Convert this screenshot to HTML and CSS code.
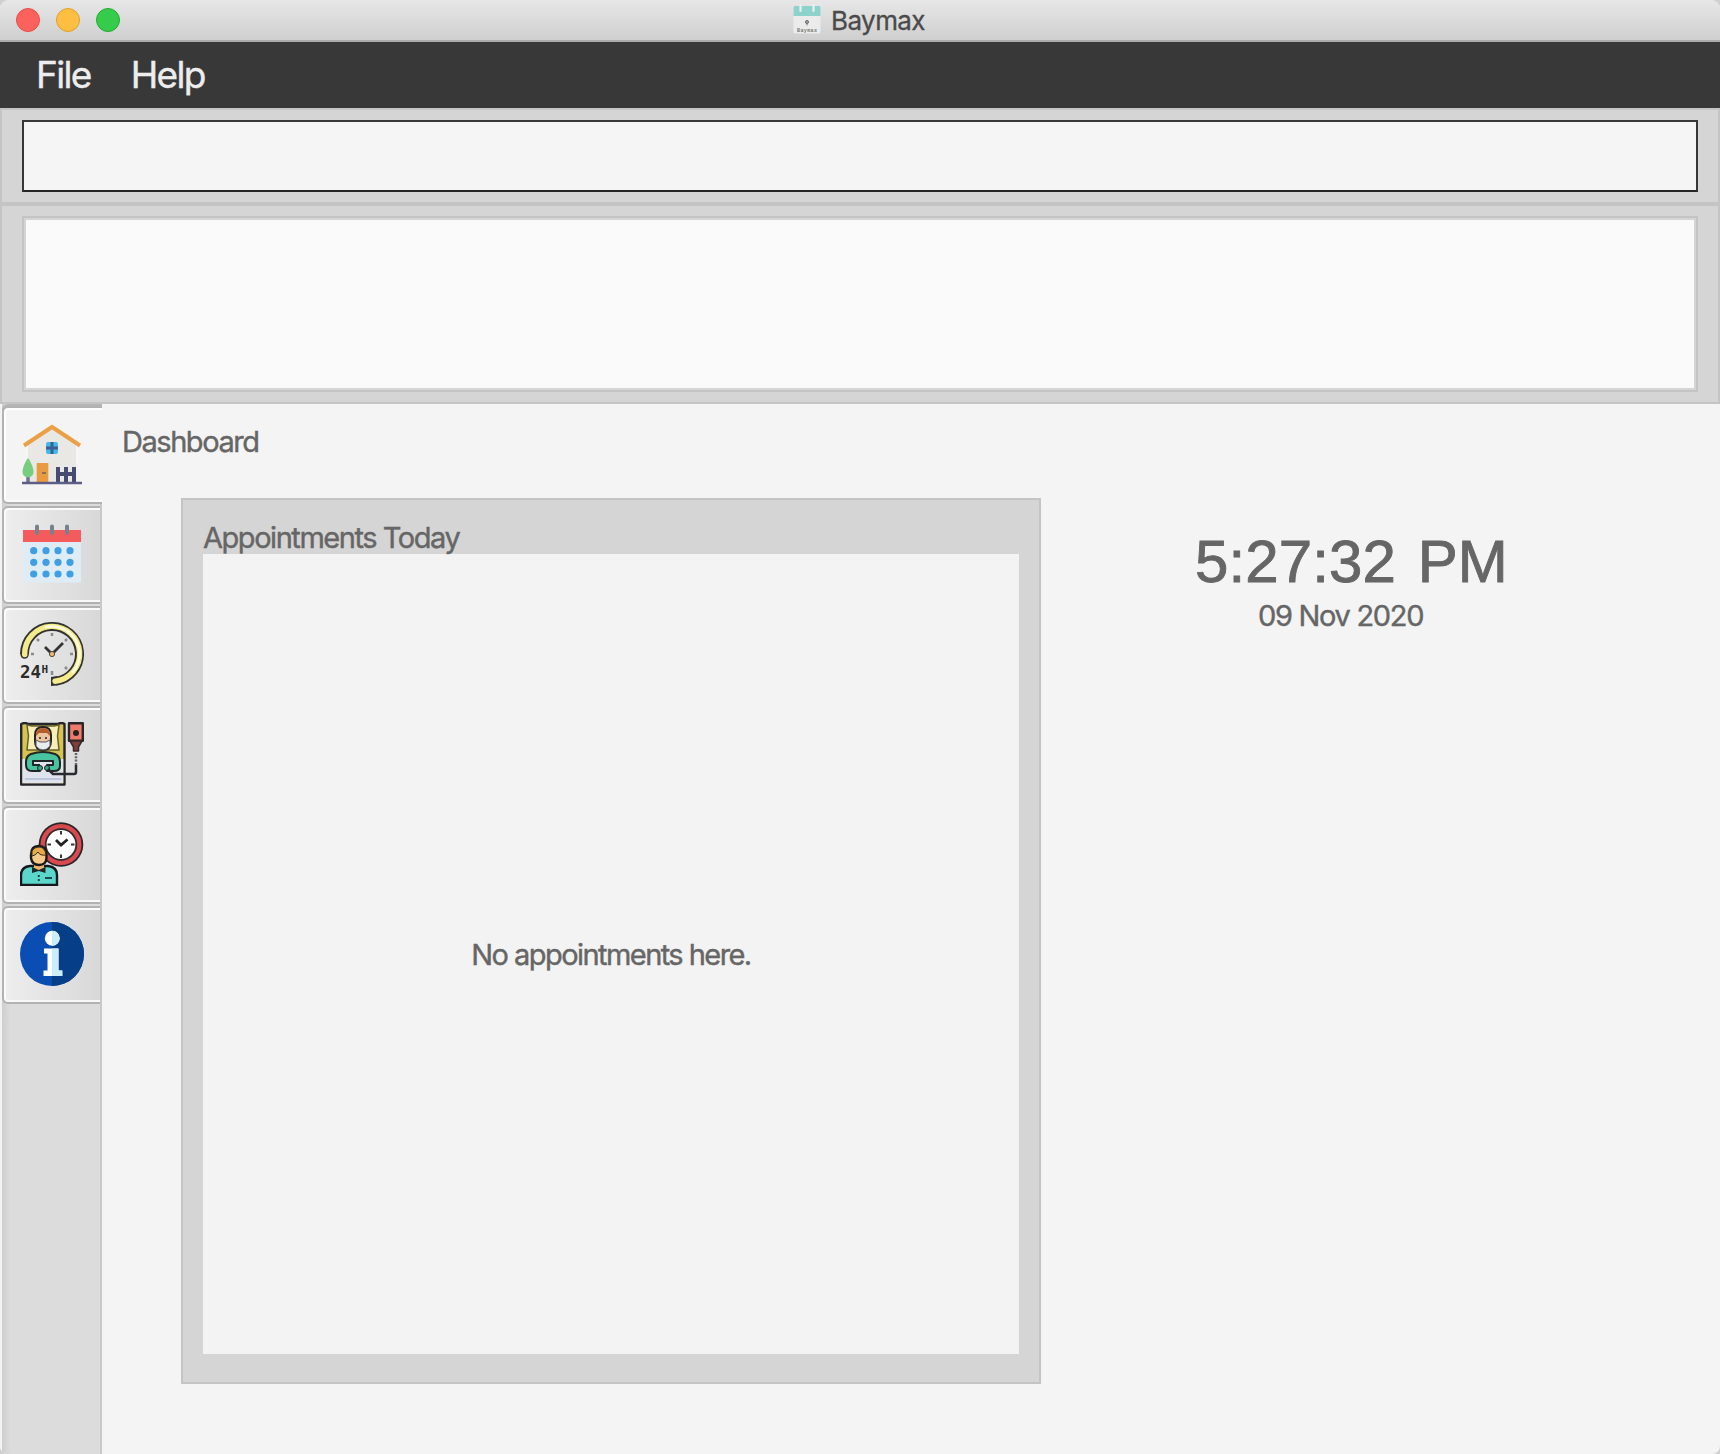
FILE: index.html
```html
<!DOCTYPE html>
<html lang="en">
<head>
<meta charset="utf-8">
<title>Baymax</title>
<link rel="stylesheet" href="styles.css">
</head>
<body>
<div class="window">
  <header class="titlebar">
    <div class="lights">
      <span class="light close"></span>
      <span class="light minimise"></span>
      <span class="light maximise"></span>
    </div>
    <div class="title">
      <svg class="app-icon" viewBox="0 0 28 30">
        <rect x=".5" y="2" width="27" height="27.500" rx="1.500" fill="#ebebeb"/>
        <path d="M.5 12V3.500Q.5 2 2 2H26Q27.500 2 27.500 3.500V12Z" fill="#8ed3cb"/>
        <path d="M7.500 1V7M20.500 1V7" stroke="#e9efee" stroke-width="2.200" stroke-linecap="round"/>
        <circle cx="14" cy="18" r="1.500" fill="#aaa" stroke="#666"/>
        <path d="M14 20V21.500" stroke="#777"/>
        <text x="14" y="27.500" text-anchor="middle" textLength="20" class="app-icon-name">Baymax</text>
      </svg>
      <span class="title-text">Baymax</span>
    </div>
  </header>
  <nav class="menubar">
    <span class="menu file">File</span>
    <span class="menu help">Help</span>
  </nav>
  <section class="pane command-pane"><div class="command-box"></div></section>
  <section class="pane result-pane"><div class="result-box"></div></section>
  <main class="content">
    <aside class="tabs">
      <div class="tab selected">
        <svg class="icon" viewBox="0 0 64 64">
          <path d="M8 22L32 5L56 22V60H8Z" fill="#e9e8e4"/>
          <path d="M4 23.500L32 5L60 23.500" fill="none" stroke="#eba046" stroke-width="4"/>
          <rect x="26" y="20" width="12" height="12" rx="2" fill="#43b9ea"/>
          <path d="M32 20V32M26 26H38" stroke="#3d5f92" stroke-width="3"/>
          <rect x="16.700" y="41" width="11.600" height="20" fill="#e99b3f"/>
          <path d="M22 51H26" stroke="#8d7252" stroke-width="2"/>
          <path d="M8 50V61" stroke="#6f7292" stroke-width="3.500"/>
          <path d="M8 36C11 40 13.500 46 13.500 50C13.500 57 2.500 57 2.500 50C2.500 46 5 40 8 36Z" fill="#76ce7e"/>
          <path d="M38 45V61M46 45V61M54 45V61M36 52H56" stroke="#474a72" stroke-width="4"/>
          <path d="M2 61H62" stroke="#5c5e86" stroke-width="2.500"/>
        </svg>
      </div>
      <div class="tab">
        <svg class="icon" viewBox="0 0 64 64">
          <rect x="3" y="19" width="58" height="41.500" fill="#deedf5"/>
          <rect x="3" y="8" width="58" height="12" fill="#f55a5c"/>
          <path d="M17 4.500V11M32 4.500V11M47 4.500V11" stroke="#77828b" stroke-width="4" stroke-linecap="round"/>
          <g fill="#3f9fe2">
            <circle cx="13.700" cy="28.700" r="3.600"/><circle cx="26" cy="28.700" r="3.600"/><circle cx="38" cy="28.700" r="3.600"/><circle cx="50" cy="28.700" r="3.600"/>
            <circle cx="13.700" cy="40.300" r="3.600"/><circle cx="26" cy="40.300" r="3.600"/><circle cx="38" cy="40.300" r="3.600"/><circle cx="50" cy="40.300" r="3.600"/>
            <circle cx="13.700" cy="52" r="3.600"/><circle cx="26" cy="52" r="3.600"/><circle cx="38" cy="52" r="3.600"/><circle cx="50" cy="52" r="3.600"/>
          </g>
        </svg>
      </div>
      <div class="tab">
        <svg class="icon" viewBox="0 0 64 64">
          <path d="M4.500 32A27.500 27.500 0 1 1 36 59.200" fill="none" stroke="#33332f" stroke-width="9"/>
          <circle cx="4.600" cy="32.500" r="4.200" fill="#33332f"/>
          <path d="M31 55L37 54V63.500L31 64Z" fill="#33332f"/>
          <path d="M4.700 32.500A27.500 27.500 0 1 1 35 59.200" fill="none" stroke="#f4eb8c" stroke-width="5.400" stroke-linecap="round"/>
          <path d="M25 5.500A27.500 27.500 0 0 1 52 51" fill="none" stroke="#fffce0" stroke-width="2.500"/>
          <path d="M32 11V14M11 32H14M50 32H53M32 49V53M17 17L19 19M47 17L45 19M47 47L45 45" stroke="#8b8b8b" stroke-width="2.500"/>
          <path d="M25 25L32 32L43 21" fill="none" stroke="#333" stroke-width="2.800"/>
          <circle cx="32" cy="32" r="2.600" fill="#e9b980" stroke="#554733"/>
          <text x="0" y="55.500" textLength="21" lengthAdjust="spacingAndGlyphs" class="hours">24</text>
          <text x="21.500" y="50.500" class="hours-unit">H</text>
        </svg>
      </div>
      <div class="tab">
        <svg class="icon" viewBox="0 0 64 64" stroke-linejoin="round">
          <path d="M1.200 2Q5 0 8 2H38Q42 0 44.500 2V62.500H1.200Z" fill="#d6c452" stroke="#25262b" stroke-width="2.400"/>
          <path d="M7 3L12 4H34L39 3L37.500 14L39 28H7L8.500 14Z" fill="#f8efb8" stroke="#65602e" stroke-width="1.500"/>
          <path d="M2.400 37H43.300V61.300H2.400Z" fill="#dfe3ee"/>
          <path d="M5 57H41" stroke="#bfc6d8" stroke-width="2"/>
          <path d="M15 19V13Q15 5 23 5Q31 5 31 13V19Q31 28 23 28Q15 28 15 19Z" fill="#edc3a0" stroke="#29221f" stroke-width="2"/>
          <path d="M16 14Q16 6 23 6Q30 6 30 14L27 11H19Z" fill="#b45d29"/>
          <path d="M16 18L20 20H26L30 18V24Q27 28 23 28Q19 28 16 24Z" fill="#e8edf0" stroke="#56595d"/>
          <path d="M19 16H21M25 16H27" stroke="#29221f" stroke-width="1.500"/>
          <path d="M11 32Q23 28 35 32Q40 34 40 40V44Q40 49 34 49H27V43H33V39H13V43H20V49H12Q6 49 6 43V40Q6 34 11 32Z" fill="#48c49e" stroke="#202726" stroke-width="2"/>
          <path d="M20 40H26V49H20Z" fill="#e1e5ef"/>
          <circle cx="20" cy="46" r="2.500" fill="#39a685" stroke="#222"/><circle cx="27" cy="46" r="2.500" fill="#39a685" stroke="#222"/>
          <rect x="49" y="1.200" width="13.800" height="17.500" fill="#f07b6b" stroke="#292629" stroke-width="2.400"/>
          <circle cx="56" cy="11" r="3" fill="#282124"/>
          <path d="M50 19H62L58.500 25V29H53.500V25Z" fill="#7e3e39" stroke="#37292b" stroke-width="1.500"/>
          <path d="M56 31V43" stroke="#666" stroke-width="2.500" stroke-dasharray="2 1.300"/>
          <path d="M56 43V50Q56 52 54 52H33L28 47" fill="none" stroke="#292b30" stroke-width="2.500"/>
        </svg>
      </div>
      <div class="tab">
        <svg class="icon" viewBox="0 0 64 64">
          <circle cx="41" cy="22.500" r="22.300" fill="#292528"/>
          <circle cx="41" cy="22.500" r="18" fill="#fff" stroke="#d94a50" stroke-width="5"/>
          <circle cx="41" cy="22.500" r="15.300" fill="#fff" stroke="#302a2c" stroke-width="1.800"/>
          <path d="M41 9V12.500M27.500 22.500H31M51 22.500H54.500M41 32.500V36" stroke="#333" stroke-width="2"/>
          <path d="M36 18L41 23L47.500 17.500" fill="none" stroke="#222" stroke-width="2.800"/>
          <path d="M1 63V53Q1 45 10 44H28Q37 45 37 53V63Z" fill="#5cd6cb" stroke="#15191c" stroke-width="2.400"/>
          <path d="M14 41H24V46L19 49L14 46Z" fill="#e9b66c"/>
          <path d="M11 33Q11 24 18.700 24Q26.500 24 26.500 33V36Q26 43 19 43Q12 43 11 36Z" fill="#f6c987" stroke="#17191b" stroke-width="2.400"/>
          <path d="M12 34V29Q14 25 19 25Q25 25 26 33Q20 34 18 30Q15 34 12 34Z" fill="#e7a947" stroke="#3a2c1c"/>
          <path d="M12 45L18.800 48L25.500 45V51L18.800 49L12 51Z" fill="#22272a"/>
          <path d="M18.800 53V55M18.800 57V59M25 56H32" stroke="#1b4b4b" stroke-width="2"/>
        </svg>
      </div>
      <div class="tab">
        <svg class="icon" viewBox="0 0 64 64">
          <circle cx="32" cy="32" r="32" fill="#0b4eb3"/>
          <path d="M32 0A32 32 0 0 1 32 64Z" fill="#063e88"/>
          <circle cx="32.300" cy="16.300" r="7.500" fill="#fff"/>
          <path d="M32 8.800A7.500 7.500 0 0 1 32 23.800Z" fill="#cbeefb"/>
          <path d="M24 26.500H38.500V48.500H42.300V54H23.500V48.500H27.500V31.500H24Z" fill="#fff"/>
          <path d="M32 26.500H38.500V48.500H42.300V54H32Z" fill="#cbeefb"/>
        </svg>
      </div>
    </aside>
    <section class="dashboard">
      <h1 class="heading">Dashboard</h1>
      <div class="columns">
        <section class="appointments">
          <h2 class="subheading">Appointments Today</h2>
          <div class="list"><span class="empty">No appointments here.</span></div>
        </section>
        <section class="clock">
          <div class="time">5:27:32 PM</div>
          <div class="date">09 Nov 2020</div>
        </section>
      </div>
    </section>
  </main>
</div>
</body>
</html>
```
FILE: styles.css
```css
* { box-sizing: border-box; }
body {
  margin: 0;
  background: #d0d0d0;
  font-family: Inter, "Liberation Sans", sans-serif;
  color: #666;
}
.window {
  display: flex;
  flex-direction: column;
  width: 1720px;
  height: 1454px;
  overflow: hidden;
  border-radius: 9px 9px 8px 8px;
  background: #f4f4f4;
}
.titlebar {
  display: grid;
  grid-template-columns: 1fr auto 1fr;
  flex: none;
  height: 42px;
  border-bottom: 2px solid #acacac;
  background: linear-gradient(#e7e7e7, #cfcfcf);
}
.lights { display: flex; gap: 16px; padding: 8px 0 0 16px; }
.light { width: 24px; height: 24px; border: 1px solid; border-radius: 50%; }
.close { background: #fc625d; border-color: #e2504c; }
.minimise { background: #fdbe41; border-color: #dfa033; }
.maximise { background: #35cb4b; border-color: #27a937; }
.title { display: flex; gap: 10px; padding: 4px 2px 0 0; }
.app-icon { width: 28px; height: 30px; }
.app-icon-name { font: bold 5px "Liberation Mono", monospace; fill: #777; }
.title-text {
  font-size: 26px;
  line-height: 34px;
  letter-spacing: -0.6px;
  color: #4a4a4a;
  -webkit-text-stroke: 0.3px;
}
.menubar {
  display: flex;
  flex: none;
  gap: 40px;
  height: 66px;
  padding-left: 36px;
  background: #383838;
}
.menu {
  font-size: 37px;
  line-height: 66px;
  letter-spacing: -1.65px;
  color: #ededed;
  -webkit-text-stroke: 0.4px;
}
.pane {
  flex: none;
  padding: 10px 20px;
  border: 2px solid #c4c4c4;
  background: #d5d5d5;
}
.command-pane { height: 96px; }
.result-pane { height: 200px; }
.command-box {
  height: 72px;
  border: 2px solid #383838;
  border-bottom-color: #262626;
  background: #f5f5f5;
}
.result-box {
  height: 176px;
  padding: 2px;
  border: 2px solid #c4c4c4;
  background: #fafafa content-box;
  box-shadow: inset 0 0 0 2px #d5d5d5;
}
.content { display: flex; flex: 1; }
.tabs {
  display: flex;
  flex-direction: column;
  gap: 2px;
  width: 102px;
  padding: 2px 0 0 2px;
  border-right: 2px solid #c8c8c8;
  background: linear-gradient(90deg, #f3f3f3 2px, #cecece 2px, #dcdcdc 10px, #dcdcdc);
}
.tab {
  height: 98px;
  padding: 14px 0 0 16px;
  border: 2px solid #b2b2b2;
  border-right: 0;
  border-radius: 6px 0 0 6px;
  background: linear-gradient(90deg, #eee, #d8d8d8);
  box-shadow: inset 2px 2px #fbfbfb, inset 0 -2px #f9f9f9;
}
.selected {
  margin-right: -2px;
  background: #f4f4f4;
  box-shadow: inset 2px 2px #fff, inset 0 -2px #fafafa, 0 -2px #b5b5b5;
}
.icon { display: block; width: 64px; height: 64px; }
.hours { font: bold 17px "DejaVu Sans Mono", monospace; fill: #2c2c2c; }
.hours-unit { font: bold 11px "DejaVu Sans Mono", monospace; fill: #2c2c2c; }
.dashboard { flex: 1; padding-top: 20px; }
.heading, .subheading, .empty, .date {
  margin: 0;
  font-size: 29px;
  font-weight: 400;
  line-height: 36px;
  letter-spacing: -1.45px;
  -webkit-text-stroke: 0.4px;
}
.heading { padding-left: 20px; }
.columns { display: flex; padding: 38px 0 0 79px; }
.appointments {
  width: 860px;
  height: 886px;
  padding: 20px;
  border: 2px solid #c4c4c4;
  background: #d5d5d5;
}
.subheading { height: 34px; }
.list {
  display: grid;
  place-items: center;
  height: 800px;
  padding-top: 2px;
  background: #f3f3f3;
}
.empty { letter-spacing: -1.56px; }
.clock { padding: 30px 0 0 154px; }
.time {
  font: 60px/68px "Liberation Sans", Arial, sans-serif;
  letter-spacing: 0.1px;
  word-spacing: 5px;
  white-space: pre;
  -webkit-text-stroke: 0.9px;
}
.date { padding: 2px 0 0 63px; letter-spacing: -1.3px; }
```
